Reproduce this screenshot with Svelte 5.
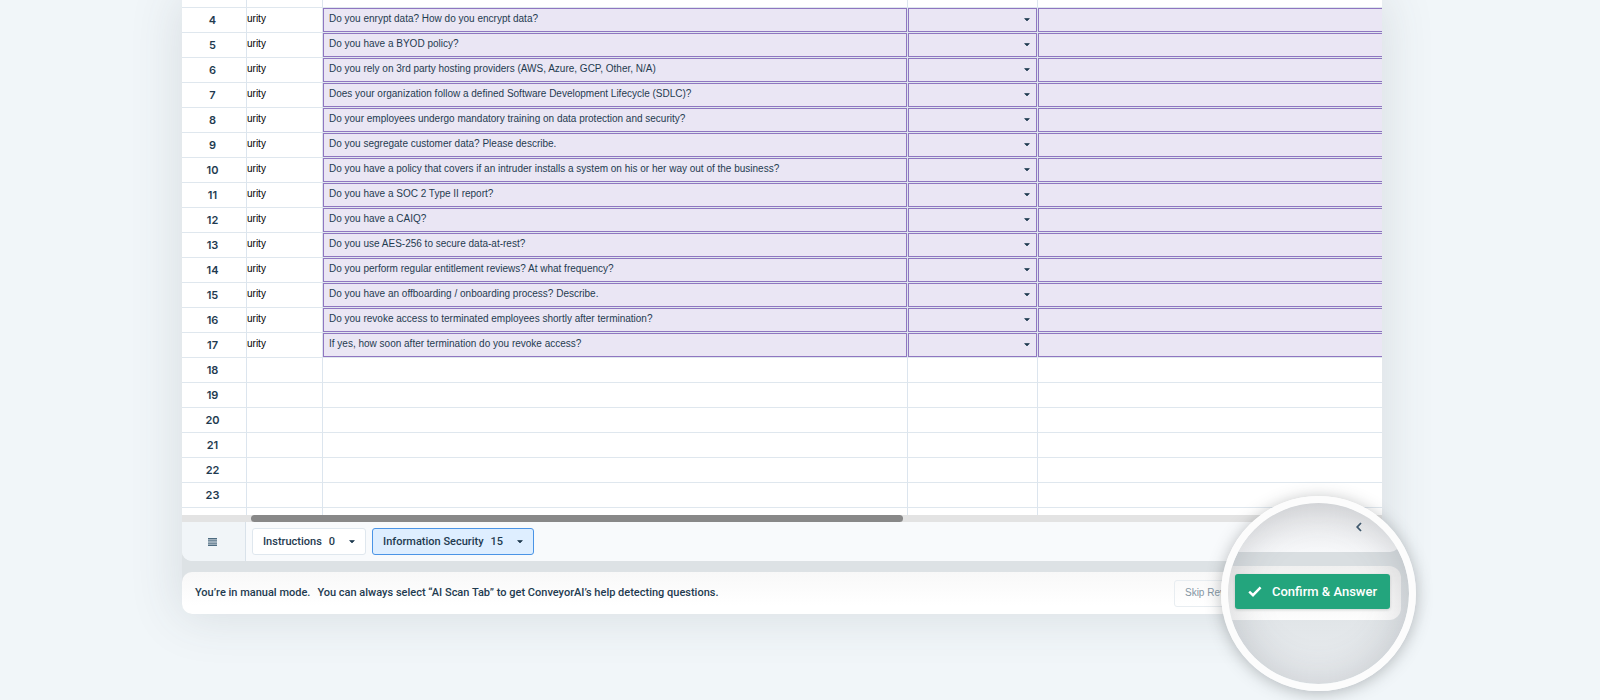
<script>
  const questions = [
    'Do you enrypt data? How do you encrypt data?',
    'Do you have a BYOD policy?',
    'Do you rely on 3rd party hosting providers (AWS, Azure, GCP, Other, N/A)',
    'Does your organization follow a defined Software Development Lifecycle (SDLC)?',
    'Do your employees undergo mandatory training on data protection and security?',
    'Do you segregate customer data? Please describe.',
    'Do you have a policy that covers if an intruder installs a system on his or her way out of the business?',
    'Do you have a SOC 2 Type II report?',
    'Do you have a CAIQ?',
    'Do you use AES-256 to secure data-at-rest?',
    'Do you perform regular entitlement reviews? At what frequency?',
    'Do you have an offboarding / onboarding process? Describe.',
    'Do you revoke access to terminated employees shortly after termination?',
    'If yes, how soon after termination do you revoke access?'
  ];
  const rows = questions.map((question, i) => ({ n: i + 4, question }));
  const emptyRows = [18, 19, 20, 21, 22, 23];
  const tabs = [
    { name: 'Instructions', count: 0, active: false },
    { name: 'Information Security', count: 15, active: true }
  ];
</script>

{#snippet caret()}
  <svg class="caret" viewBox="0 0 6 4" aria-hidden="true"><path d="M0.6 0.6h4.8L3 2.9z" fill="currentColor" stroke="currentColor" stroke-width=".7" stroke-linejoin="round" /></svg>
{/snippet}

<main>
  <div class="stack">
    <section class="sheet">
      <div class="grid">
        <table>
          <colgroup>
            <col class="c-num" /><col class="c-cat" /><col class="c-question" /><col class="c-answer" /><col />
          </colgroup>
          <tbody>
            <tr class="lead"><th></th><td></td><td></td><td></td><td></td></tr>
            {#each rows as row}
              <tr>
                <th scope="row">{row.n}</th>
                <td class="category">urity</td>
                <td><div class="cell">{row.question}</div></td>
                <td><div class="cell"><button class="pick" aria-label="Answer for row {row.n}">{@render caret()}</button></div></td>
                <td><div class="cell open"></div></td>
              </tr>
            {/each}
            {#each emptyRows as n}
              <tr><th scope="row">{n}</th><td></td><td></td><td></td><td></td></tr>
            {/each}
            <tr class="tail"><th></th><td></td><td></td><td></td><td></td></tr>
          </tbody>
        </table>
      </div>
      <div class="track"><div class="thumb"></div></div>
      <nav class="tabs">
        <button class="menu" aria-label="All sheets">
          <svg viewBox="0 0 9 8" aria-hidden="true"><path d="M0 .7h9M0 2.9h9M0 5.1h9M0 7.3h9" stroke="#4d6b80" stroke-width="1.4" /></svg>
        </button>
        <div class="tab-list">
          {#each tabs as tab}
            <button class="tab" class:active={tab.active}>
              <span>{tab.name}</span><span class="count">{tab.count}</span>{@render caret()}
            </button>
          {/each}
        </div>
      </nav>
    </section>

    <footer>
      <p><span>You’re in manual mode.</span><span>You can always select “AI Scan Tab” to get ConveyorAI’s help detecting questions.</span></p>
      <button class="skip">Skip Review</button>
    </footer>

    <div class="lens">
      <div class="lens-bar">
        <button class="back" aria-label="Previous sheets">
          <svg viewBox="0 0 6 10" aria-hidden="true"><path d="M5 1 1.2 5 5 9" fill="none" stroke="#3f5a70" stroke-width="1.8" /></svg>
        </button>
      </div>
      <div class="lens-foot">
        <button class="confirm">
          <svg viewBox="0 0 14 11" aria-hidden="true"><path d="M1.2 5.6 5 9.2 12.6 1.4" fill="none" stroke="#fff" stroke-width="2.4" /></svg>
          Confirm &amp; Answer
        </button>
      </div>
    </div>
  </div>
</main>

<style>
  :global(body) {
    margin: 0;
    background: #f1f6f9;
  }
  main {
    box-sizing: border-box;
    min-height: 100vh;
    padding: 0 218px 86px 182px;
    overflow: hidden;
    color: #1f3b50;
    font: 500 11px/16px Roboto, "Liberation Sans", sans-serif;
  }
  button {
    margin: 0;
    padding: 0;
    border: 0;
    background: none;
    color: inherit;
    font: inherit;
    white-space: nowrap;
  }
  svg {
    display: block;
    flex: none;
  }
  .stack {
    position: relative;
    display: flex;
    flex-direction: column;
    gap: 11px;
    border-radius: 0 0 10px 10px;
    background: #dde2e5;
    box-shadow: 0 0 50px 4px rgba(60, 70, 75, 0.13);
  }
  .sheet {
    overflow: hidden;
    border-radius: 0 0 10px 10px;
    background: #f8fafc;
  }
  .grid {
    overflow: hidden;
    background: #fff;
  }
  table {
    width: 100%;
    table-layout: fixed;
    border-collapse: separate;
    border-spacing: 0;
  }
  .c-num { width: 65px; }
  .c-cat { width: 76px; }
  .c-question { width: 585px; }
  .c-answer { width: 130px; }
  th,
  td {
    box-sizing: border-box;
    height: 25px;
    padding: 0;
    border-right: 1px solid #dce5ee;
    border-bottom: 1px solid #dfe7ee;
    font-weight: 400;
    text-align: left;
    vertical-align: top;
  }
  th {
    padding-top: 4px;
    padding-right: 3px;
    font: 600 11px/16px Inter, "Liberation Sans", sans-serif;
    text-align: center;
  }
  td:last-child { border-right: 0; }
  .lead th, .lead td { height: 8px; padding: 0; }
  .tail th, .tail td { height: 7px; padding: 0; border-bottom: 0; }
  .category {
    color: #000;
    font: 10px/21px "Liberation Sans", Arial, sans-serif;
  }
  .cell {
    box-sizing: border-box;
    display: flex;
    justify-content: space-between;
    height: 24px;
    padding: 0 6px 0 5px;
    border: 1px solid #8f76c0;
    background: #eae6f4;
    font: 10px/19px "Liberation Sans", Arial, sans-serif;
    white-space: nowrap;
  }
  .open { border-right: 0; }
  .caret { width: 6px; height: 4px; }
  .pick {
    display: flex;
    align-items: center;
    margin-left: auto;
  }
  .track { background: #e3e3e3; }
  .thumb {
    width: 652px;
    height: 7px;
    margin-left: 69px;
    border-radius: 4px;
    background: #888;
  }
  .tabs {
    display: flex;
    height: 39px;
  }
  .menu {
    box-sizing: border-box;
    display: grid;
    place-items: center;
    width: 64px;
    padding-right: 3px;
    border-right: 1px solid #d9e2ea;
    background: #f1f5f8;
  }
  .menu svg { width: 9px; height: 8px; }
  .tab-list {
    display: flex;
    align-items: center;
    gap: 6px;
    padding-left: 6px;
  }
  .tab {
    box-sizing: border-box;
    display: flex;
    align-items: center;
    gap: 7px;
    height: 27px;
    padding: 0 10px;
    border: 1px solid #dfe7ee;
    border-radius: 3px;
    background: #fff;
  }
  .count { margin-right: 7px; }
  .tab.active {
    border-color: #4a94e6;
    background: #deeeff;
  }
  footer {
    display: flex;
    align-items: center;
    justify-content: space-between;
    height: 42px;
    padding: 0 131px 0 13px;
    border-radius: 10px;
    background: linear-gradient(#f8f8f8, #fff 80%);
  }
  footer p {
    display: flex;
    gap: 7px;
    margin: 0;
  }
  .skip {
    box-sizing: border-box;
    height: 27px;
    padding: 0 10px;
    border: 1px solid #e8edf1;
    border-radius: 3px;
    color: #8496a4;
    font: 10px/16px "Liberation Sans", Arial, sans-serif;
  }
  .lens {
    position: absolute;
    right: -34px;
    bottom: -77px;
    box-sizing: border-box;
    display: flex;
    flex-direction: column;
    gap: 14px;
    width: 195px;
    height: 195px;
    overflow: hidden;
    border: 7px solid #fcfcfc;
    border-radius: 50%;
    background: linear-gradient(#d9dee1 35%, #ebeef1) padding-box;
    box-shadow: 0 2px 16px rgba(60, 65, 70, 0.35);
  }
  .lens::after {
    content: "";
    position: absolute;
    inset: 0;
    border-radius: 50%;
    box-shadow: inset 0 0 40px rgba(70, 75, 80, 0.22);
    pointer-events: none;
  }
  .lens-bar {
    display: flex;
    justify-content: flex-end;
    box-sizing: border-box;
    height: 49px;
    margin-right: 9px;
    padding: 19px 38px 0 0;
    border-radius: 0 0 10px 0;
    background: linear-gradient(#e6e7e9, #f7f8fa);
  }
  .back { height: 10px; }
  .back svg { width: 6px; height: 10px; }
  .lens-foot {
    box-sizing: border-box;
    margin-right: 8px;
    padding: 8px 11px 11px 7px;
    border-radius: 0 12px 12px 0;
    background: linear-gradient(#f0f0f0, #fdfdfd);
  }
  .confirm {
    position: relative;
    z-index: 1;
    display: flex;
    align-items: center;
    justify-content: center;
    gap: 10px;
    width: 100%;
    height: 35px;
    border-radius: 3px;
    background: #23a57d;
    box-shadow: 0 1px 3px rgba(40, 60, 55, 0.2);
    color: #fff;
    font-size: 13px;
  }
  .confirm svg { width: 14px; height: 11px; }
</style>
